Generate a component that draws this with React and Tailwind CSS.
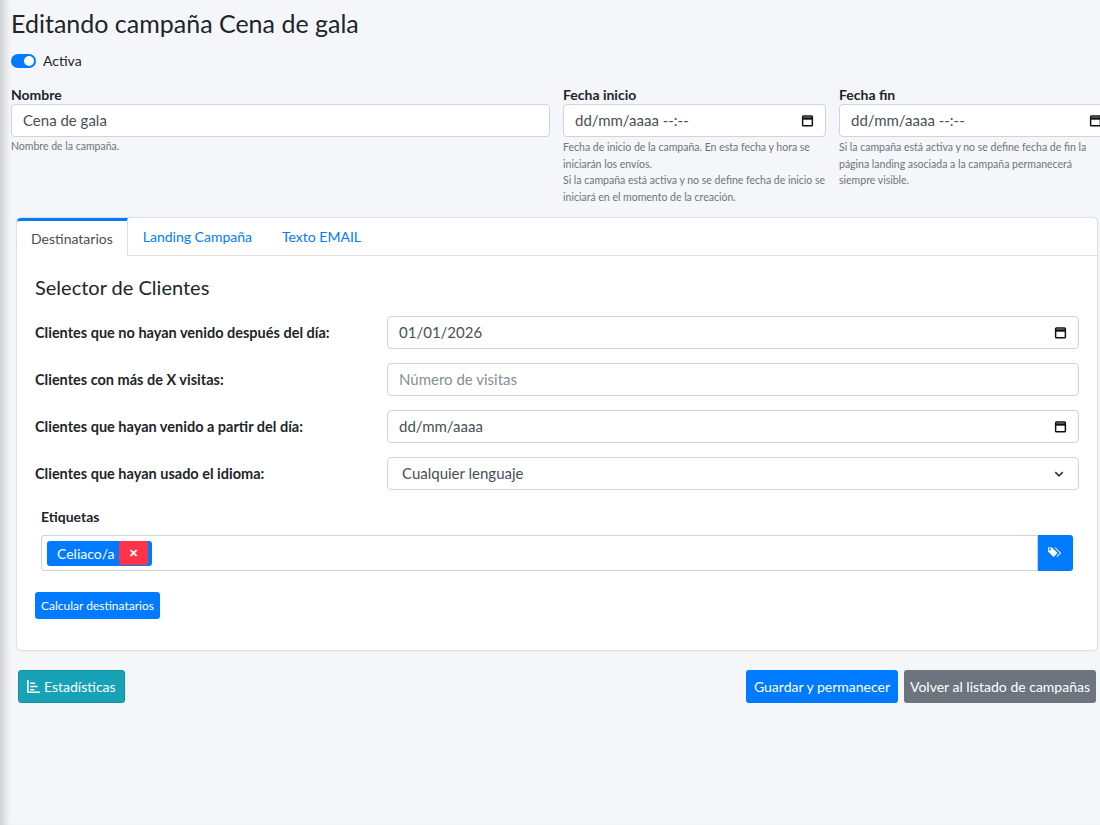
import React from "react";

const Cal = () => (
  <svg width="13" height="13" viewBox="0 0 16 16" fill="none" stroke="#111" strokeWidth="1.8">
    <rect x="2" y="2.5" width="12" height="12" rx="1" />
    <path d="M2 5.5h12" strokeWidth="3" />
  </svg>
);

const Field = ({ children, cls = "" }) => (
  <div className={"h-[33px] bg-white border border-[#ced4da] rounded-[4px] flex items-center px-[11px] text-[15px] " + cls}>{children}</div>
);

const Row = ({ label, children }) => (
  <div className="flex items-center">
    <div className="w-[352px] font-bold text-[14.5px] text-[#212529]">{label}</div>
    <div className="flex-1">{children}</div>
  </div>
);

export default function App() {
  return (
    <div className="w-[1100px] h-[825px] overflow-hidden bg-[#f4f6f9] text-[#212529] shadow-[inset_10px_0_8px_-6px_rgba(0,0,0,0.18)]" style={{ fontFamily: "Lato, 'Noto Sans', sans-serif" }}>
      <div className="pl-[11px]">
        <h1 className="text-[25px] pt-[7px] leading-[32px]">Editando campaña Cena de gala</h1>
        <div className="flex items-center gap-[7px] mt-[11px] text-[14px]">
          <div className="w-[25px] h-[14px] rounded-full bg-[#007bff] flex items-center justify-end pr-[2px]">
            <div className="w-[10px] h-[10px] rounded-full bg-white" />
          </div>
          Activa
        </div>
        <div className="flex gap-[13px] mt-[15px] w-[1120px]">
          <div className="w-[539px]">
            <div className="font-bold text-[14px] leading-[18px] mb-[0px]">Nombre</div>
            <Field cls="text-[#495057] text-[14.5px]">Cena de gala</Field>
            <div className="text-[10.5px] text-[#6c757d] mt-[2px]">Nombre de la campaña.</div>
          </div>
          <div className="w-[263px]">
            <div className="font-bold text-[14px] leading-[18px] mb-[0px]">Fecha inicio</div>
            <Field cls="justify-between text-[#495057]"><span>dd/mm/aaaa --:--</span><Cal /></Field>
            <div className="text-[10.5px] text-[#6c757d] mt-[2px] leading-[16.5px]">Fecha de inicio de la campaña. En esta fecha y hora se iniciarán los envíos.<br />Si la campaña está activa y no se define fecha de inicio se iniciará en el momento de la creación.</div>
          </div>
          <div className="w-[275px]">
            <div className="font-bold text-[14px] leading-[18px] mb-[0px]">Fecha fin</div>
            <Field cls="justify-between text-[#495057]"><span>dd/mm/aaaa --:--</span><Cal /></Field>
            <div className="text-[10.5px] text-[#6c757d] mt-[2px] leading-[16.5px] w-[255px]">Si la campaña está activa y no se define fecha de fin la página landing asociada a la campaña permanecerá siempre visible.</div>
          </div>
        </div>
      </div>
      <div className="ml-[17px] mt-[13px] w-[1080px] bg-white rounded-[4px] shadow-[0_0_2px_rgba(0,0,0,0.3)] h-[432px]">
        <div className="flex h-[38px] border-b border-[#dee2e6] text-[14px]">
          <div className="px-[14px] flex items-center border-r border-[#dee2e6] border-t-[3px] border-t-[#007bff] rounded-tl-[4px] bg-white text-[#495057] -mb-px">Destinatarios</div>
          <div className="px-[15px] flex items-center text-[#007bff]">Landing Campaña</div>
          <div className="px-[15px] flex items-center text-[#007bff]">Texto EMAIL</div>
        </div>
        <div className="px-[18px]">
          <h2 className="text-[20px] mt-[16px] mb-[14px]">Selector de Clientes</h2>
          <div className="flex flex-col gap-[14px]">
            <Row label="Clientes que no hayan venido después del día:"><Field cls="justify-between text-[#495057] text-[14px]"><span>01/01/2026</span><Cal /></Field></Row>
            <Row label="Clientes con más de X visitas:"><Field cls="text-[#868e96] text-[14px]">Número de visitas</Field></Row>
            <Row label="Clientes que hayan venido a partir del día:"><Field cls="justify-between text-[#495057] text-[14px]"><span>dd/mm/aaaa</span><Cal /></Field></Row>
            <Row label="Clientes que hayan usado el idioma:"><Field cls="justify-between text-[#495057] text-[14.5px] px-[14px]"><span>Cualquier lenguaje</span>
              <svg width="10" height="10" viewBox="0 0 16 16" fill="none" stroke="#333" strokeWidth="2.5"><path d="M2 5l6 6 6-6" /></svg></Field></Row>
          </div>
          <div className="px-[6px]">
            <div className="font-bold text-[14px] mt-[16px] mb-[8px]">Etiquetas</div>
            <div className="flex h-[36px]">
              <div className="flex-1 border border-[#ced4da] rounded-l-[3px] flex items-center px-[5px]">
                <div className="h-[25px] bg-[#007bff] rounded-[3px] flex items-center text-white text-[14px] pl-[10px]">
                  Celiaco/a
                  <div className="ml-[5px] w-[29px] h-[24px] bg-[#ff3547] rounded-[3px] flex items-center justify-center text-[11px] font-bold mr-[4px]">✕</div>
                </div>
              </div>
              <div className="w-[35px] bg-[#007bff] rounded-r-[3px] flex items-center justify-center">
                <svg width="16" height="14" viewBox="0 0 20 16" fill="white"><path d="M0 1.5V6l7 7 5-5-7-7H1.5A1.5 1.5 0 000 1.5zm3.5 2a1.2 1.2 0 110-.01z" /><path d="M8 1h1.5l7 7-5 5-.8-.8L15 8z" /></svg>
              </div>
            </div>
          </div>
          <div className="mt-[21px] inline-flex h-[27px] px-[6px] items-center bg-[#007bff] text-white text-[12px] rounded-[3px]">Calcular destinatarios</div>
        </div>
      </div>
      <div className="flex justify-between ml-[18px] mr-[4px] mt-[20px] text-[14px]">
        <div className="h-[33px] px-[8px] bg-[#17a2b8] text-white flex items-center gap-[4px] rounded-[3px] border border-[#148ea1]">
          <svg width="13" height="13" viewBox="0 0 16 16" fill="white"><path d="M0 0h2v14h14v2H0z" /><path d="M4 3h6v2H4zM4 7h9v2H4zM4 11h5v2H4z" /></svg>
          Estadísticas
        </div>
        <div className="flex gap-[6px]">
          <div className="h-[33px] px-[8px] bg-[#007bff] text-white flex items-center rounded-[3px]">Guardar y permanecer</div>
          <div className="h-[33px] px-[6px] bg-[#6c757d] text-white flex items-center rounded-[3px]">Volver al listado de campañas</div>
        </div>
      </div>
    </div>
  );
}
